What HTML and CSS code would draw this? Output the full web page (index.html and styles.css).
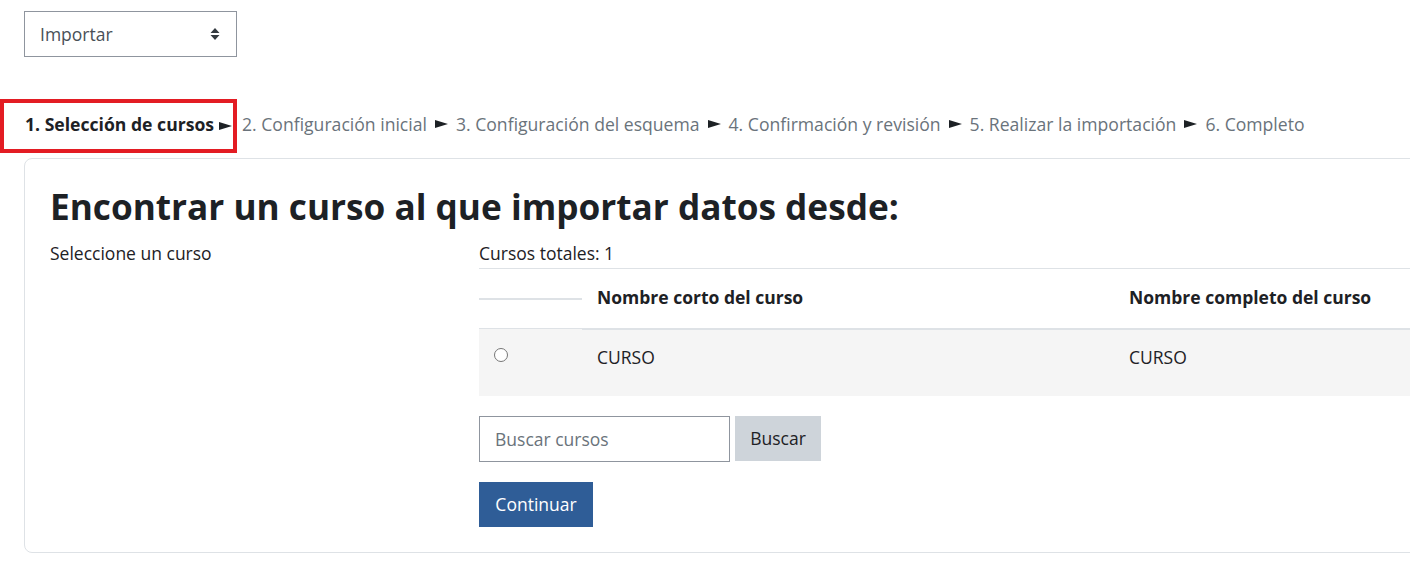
FILE: index.html
```html
<!doctype html>
<html lang="es">
<head>
  <meta charset="utf-8">
  <title>Importar</title>
  <meta name="viewport" content="width=device-width,initial-scale=1">
  <link rel="stylesheet" href="styles.css">
</head>
<body>
  <div class="page">
    <div class="select-wrap">
      <div class="fake-select">
        <span>Importar</span>
        <svg class="caret" width="10" height="14" viewBox="0 0 10 14"><path d="M5 1 L9.5 6 H0.5 Z M5 13 L9.5 8 H0.5 Z" fill="#343a40"/></svg>
      </div>
    </div>

    <div class="steps">
      <span class="step current">1. Selección de cursos <svg class="sep" width="13" height="8" viewBox="0 0 13 8"><path d="M0 0 L13 4 L0 8 Z" fill="#1d2125"/></svg></span>
      <span class="step">2. Configuración inicial</span><svg class="sep" width="13" height="8" viewBox="0 0 13 8"><path d="M0 0 L13 4 L0 8 Z" fill="#1d2125"/></svg>
      <span class="step">3. Configuración del esquema</span><svg class="sep" width="13" height="8" viewBox="0 0 13 8"><path d="M0 0 L13 4 L0 8 Z" fill="#1d2125"/></svg>
      <span class="step">4. Confirmación y revisión</span><svg class="sep" width="13" height="8" viewBox="0 0 13 8"><path d="M0 0 L13 4 L0 8 Z" fill="#1d2125"/></svg>
      <span class="step">5. Realizar la importación</span><svg class="sep" width="13" height="8" viewBox="0 0 13 8"><path d="M0 0 L13 4 L0 8 Z" fill="#1d2125"/></svg>
      <span class="step">6. Completo</span>
    </div>

    <div class="card">
      <h2>Encontrar un curso al que importar datos desde:</h2>
      <div class="row">
        <div class="label-col">Seleccione un curso</div>
        <div class="main-col">
          <div class="total">Cursos totales: 1</div>
          <table class="courses">
            <thead>
              <tr>
                <th class="c-radio"><div class="rule"></div></th>
                <th class="c-short">Nombre corto del curso</th>
                <th>Nombre completo del curso</th>
              </tr>
            </thead>
            <tbody>
              <tr>
                <td class="c-radio"><span class="radio"></span></td>
                <td>CURSO</td>
                <td>CURSO</td>
              </tr>
            </tbody>
          </table>
          <div class="search">
            <input type="text" placeholder="Buscar cursos">
            <button class="btn btn-secondary">Buscar</button>
          </div>
          <button class="btn btn-primary">Continuar</button>
        </div>
      </div>
    </div>
  </div>
</body>
</html>
```

FILE: styles.css
```css
/* base */
html, body {
  overflow: hidden;
}
* {
  box-sizing: border-box;
}
body {
  margin: 0;
  font-family: "Open Sans", "Noto Sans", sans-serif;
  font-size: 17.5px;
  color: #1d2125;
  background: #fff;
}
.page {
  padding: 11px 0 0 24px;
}

/* select */
.fake-select {
  width: 213px;
  height: 46px;
  border: 1px solid #8f959e;
  display: flex;
  align-items: center;
  justify-content: space-between;
  padding: 0 16px 0 15px;
  color: #495057;
}
.caret {
  display: block;
}

/* steps */
.steps {
  margin: 42px 0 5px -24px;
  display: flex;
  align-items: center;
  gap: 8px;
  color: #6a737b;
  white-space: nowrap;
  font-size: 17.6px;
}
.steps > .step, .steps > .sep {
  margin-bottom: 4px;
}
.step.current {
  color: #1d2125;
  font-weight: 700;
  border: 4px solid #e31c23;
  padding: 9px 0 13px 21px;
  width: 237px;
  margin: 0 -3px 0 0;
}
.sep {
  display: inline-block;
  vertical-align: middle;
  margin-top: -1px;
}

/* card */
.card {
  width: 1440px;
  border: 1px solid #dee2e6;
  border-radius: 8px;
  padding: 24px 25px 25px 25px;
}
.card h2 {
  margin: 2px 0 14px;
  font-size: 35.2px;
  font-weight: 700;
  line-height: 1.2;
}
.row {
  display: flex;
}
.label-col {
  width: 429px;
  flex: none;
}
.main-col {
  flex: 1;
}
.total {
  padding-bottom: 3px;
}

/* table */
.courses {
  width: 100%;
  border-collapse: collapse;
  margin-bottom: 20px;
}
.courses th, .courses td {
  text-align: left;
  padding: 0 15px;
  vertical-align: middle;
}
.courses thead tr {
  height: 60px;
  border-top: 1px solid #dee2e6;
}
.courses th {
  font-weight: 700;
  border-bottom: 2px solid #dee2e6;
  padding-bottom: 2px;
}
.courses th.c-radio {
  width: 103px;
  padding: 0;
  border-bottom: 1px solid #dee2e6;
}
.rule {
  border-top: 2px solid #dee2e6;
  margin-top: 1px;
}
.courses th.c-short {
  width: 532px;
}
.courses tbody tr {
  height: 67px;
  background: #f5f5f5;
}
.courses tbody td {
  vertical-align: top;
  padding-top: 15px;
}
.radio {
  display: inline-block;
  width: 14px;
  height: 14px;
  border: 1px solid #767676;
  border-radius: 50%;
  background: #fff;
  margin-top: 4px;
  vertical-align: top;
}

/* buttons */
.search {
  display: flex;
  gap: 5px;
  margin-bottom: 20px;
}
.search input {
  width: 251px;
  height: 46px;
  border: 1px solid #8f959e;
  padding: 0 15px;
  font: inherit;
  color: #495057;
}
.search input::placeholder {
  color: #6a737b;
}
.btn {
  height: 45px;
  border: none;
  padding: 0 16px;
  font: inherit;
}
.btn-secondary {
  width: 86px;
  padding: 0;
  background: #ced4da;
  color: #1d2125;
}
.btn-primary {
  width: 114px;
  padding: 0;
  background: #2f5d97;
  color: #fff;
}
```
